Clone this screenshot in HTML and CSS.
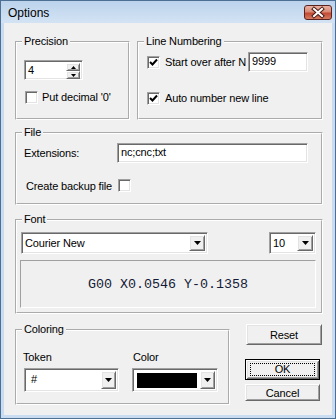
FILE: index.html
```html
<!DOCTYPE html>
<html lang="en">
<head>
  <meta charset="UTF-8" />
  <title>Options</title>
  <link rel="stylesheet" href="styles.css">
</head>
<body>
  <div class="window">
    <div class="titlebar">
      <span class="title">Options</span>
      <div class="close">
        <svg width="26" height="13" viewBox="0 0 26 13">
          <path d="M9 3 L17 10 M17 3 L9 10" stroke="#4a1c16" stroke-width="4" stroke-linecap="square"/>
          <path d="M9 3 L17 10 M17 3 L9 10" stroke="#fff" stroke-width="2" stroke-linecap="square"/>
        </svg>
      </div>
    </div>

    <div class="client">
      <!-- Precision + Line numbering -->
      <div class="row">
        <div class="group precision">
          <div class="legend">Precision</div>
          <div class="spin sunken">
            <span class="field-text">4</span>
            <div class="spin-btns">
              <div class="spin-btn raised">
                <svg width="5" height="3" viewBox="0 0 5 3"><path d="M2.5 0 L5 3 L0 3 Z" fill="#000"/></svg>
              </div>
              <div class="spin-btn raised">
                <svg width="5" height="3" viewBox="0 0 5 3"><path d="M0 0 L5 0 L2.5 3 Z" fill="#000"/></svg>
              </div>
            </div>
          </div>
          <div class="check-row decimal">
            <span class="check sunken"></span>
            <span class="check-label">Put decimal '0'</span>
          </div>
        </div>

        <div class="group numbering">
          <div class="legend">Line Numbering</div>
          <div class="check-row start-over">
            <span class="check sunken checked">
              <svg width="9" height="9" viewBox="0 0 9 9"><path d="M1 4 L3.5 6.5 L8 1.5" stroke="#000" stroke-width="2" fill="none"/></svg>
            </span>
            <span class="check-label wide">Start over after N</span>
            <div class="textbox sunken n-box">9999</div>
          </div>
          <div class="check-row auto-number">
            <span class="check sunken checked">
              <svg width="9" height="9" viewBox="0 0 9 9"><path d="M1 4 L3.5 6.5 L8 1.5" stroke="#000" stroke-width="2" fill="none"/></svg>
            </span>
            <span class="check-label">Auto number new line</span>
          </div>
        </div>
      </div>

      <!-- File -->
      <div class="group file">
        <div class="legend">File</div>
        <div class="field-row ext-row">
          <span class="ext-label">Extensions:</span>
          <div class="textbox sunken ext-box">nc;cnc;txt</div>
        </div>
        <div class="field-row backup-row">
          <span class="backup-label">Create backup file</span>
          <span class="check sunken"></span>
        </div>
      </div>

      <!-- Font -->
      <div class="group font">
        <div class="legend">Font</div>
        <div class="font-row">
          <div class="combo sunken font-name">
            <span class="field-text">Courier New</span>
            <div class="drop raised">
              <svg width="7" height="4" viewBox="0 0 7 4"><path d="M0 0 L7 0 L3.5 4 Z" fill="#000"/></svg>
            </div>
          </div>
          <div class="combo sunken font-size">
            <span class="field-text">10</span>
            <div class="drop raised">
              <svg width="7" height="4" viewBox="0 0 7 4"><path d="M0 0 L7 0 L3.5 4 Z" fill="#000"/></svg>
            </div>
          </div>
        </div>
        <div class="preview">G00 X0.0546 Y-0.1358</div>
      </div>

      <!-- Coloring + buttons -->
      <div class="row bottom-row">
        <div class="group coloring">
          <div class="legend">Coloring</div>
          <div class="color-cols">
            <div class="col token-col">
              <div class="col-label">Token</div>
              <div class="combo sunken token-combo">
                <span class="field-text hash">#</span>
                <div class="drop raised">
                  <svg width="7" height="4" viewBox="0 0 7 4"><path d="M0 0 L7 0 L3.5 4 Z" fill="#000"/></svg>
                </div>
              </div>
            </div>
            <div class="col color-col">
              <div class="col-label">Color</div>
              <div class="combo sunken color-combo">
                <span class="swatch"></span>
                <div class="drop raised">
                  <svg width="7" height="4" viewBox="0 0 7 4"><path d="M0 0 L7 0 L3.5 4 Z" fill="#000"/></svg>
                </div>
              </div>
            </div>
          </div>
        </div>

        <div class="buttons">
          <div class="btn raised reset">Reset</div>
          <div class="btn ok"><span class="focus">OK</span></div>
          <div class="btn raised cancel">Cancel</div>
        </div>
      </div>
    </div>
  </div>
</body>
</html>
```

FILE: styles.css
```css
body {
  margin: 0;
  font-family: "Liberation Sans", Arial, sans-serif;
  font-size: 11px;
  letter-spacing: -0.15px;
  color: #000;
  background: #fff;
  white-space: nowrap;
}
.window {
  width: 336px;
  height: 419px;
  box-sizing: border-box;
  border: 1px solid #4d6f94;
  background: #c9dcf1;
}
.titlebar {
  height: 22px;
  display: flex;
  justify-content: space-between;
  align-items: flex-start;
  background: linear-gradient(to bottom, #bcd3ec, #d3e3f4);
}
.title {
  font-size: 12px;
  letter-spacing: 0;
  margin: 5px 0 0 7px;
}
.close {
  width: 28px;
  height: 15px;
  box-sizing: border-box;
  margin: 4px 3px 0 0;
  border: 1px solid #5b231d;
  border-radius: 3px;
  background: linear-gradient(to bottom, #eab1a3 0%, #d98a76 45%, #c24a33 55%, #d57a62 100%);
}
.close svg {
  display: block;
}
.client {
  height: 392px;
  margin: 0 3px;
  padding: 18px 0 0 11px;
  box-sizing: border-box;
  background: #f0f0f0;
}

/* shared 3D borders */
.sunken {
  box-sizing: border-box;
  border: 1px solid;
  border-color: #a0a0a0 #fff #fff #a0a0a0;
  box-shadow: inset 1px 1px #696969, inset -1px -1px #e3e3e3;
  background: #fff;
}
.raised {
  box-sizing: border-box;
  border: 1px solid;
  border-color: #fff #696969 #696969 #fff;
  box-shadow: inset 1px 1px #e3e3e3, inset -1px -1px #a0a0a0;
  background: #f0f0f0;
}

/* group boxes */
.row {
  display: flex;
}
.group {
  box-sizing: border-box;
  border: 2px groove #fff;
}
.legend {
  display: table;
  margin: -8px 0 0 5px;
  padding: 0 2px;
  line-height: 13px;
  background: #f0f0f0;
}
.precision {
  width: 115px;
  height: 79px;
}
.numbering {
  width: 186px;
  height: 79px;
  margin-left: 7px;
}

.spin {
  width: 59px;
  height: 20px;
  margin: 12px 0 0 7px;
  display: flex;
  justify-content: space-between;
}
.field-text {
  line-height: 16px;
  padding: 1px 0 0 3px;
}
.spin-btns {
  display: flex;
  flex-direction: column;
  margin: 2px 2px 0 0;
}
.spin-btn {
  width: 14px;
  height: 8px;
  display: flex;
  align-items: center;
  justify-content: center;
}
.spin-btn svg {
  display: block;
}

.check-row {
  display: flex;
  align-items: center;
}
.check {
  width: 13px;
  height: 13px;
  display: flex;
  align-items: center;
  justify-content: center;
  flex: none;
}
.check svg {
  display: block;
}
.check-label {
  margin-left: 4px;
  line-height: 13px;
}
.decimal {
  margin: 11px 0 0 8px;
}
.start-over {
  margin: 4px 0 0 8px;
  height: 20px;
}
.check-label.wide {
  width: 83px;
  margin-left: 5px;
}
.auto-number {
  margin: 20px 0 0 8px;
}
.auto-number .check-label {
  margin-left: 5px;
}
.textbox {
  height: 20px;
  line-height: 17px;
  padding-left: 3px;
}
.n-box {
  width: 60px;
}

/* file */
.file {
  width: 308px;
  height: 73px;
  margin-top: 12px;
}
.field-row {
  display: flex;
  align-items: center;
}
.ext-row {
  margin: 4px 0 0 7px;
}
.ext-label {
  width: 93px;
}
.ext-box {
  width: 191px;
}
.backup-row {
  margin: 16px 0 0 9px;
}
.backup-label {
  width: 92px;
}

/* font */
.font {
  width: 308px;
  height: 95px;
  margin-top: 14px;
}
.font-row {
  display: flex;
  justify-content: space-between;
  margin: 6px 5px 0 4px;
}
.combo {
  height: 22px;
  display: flex;
  justify-content: space-between;
  align-items: stretch;
}
.combo .field-text {
  line-height: 18px;
}
.drop {
  width: 16px;
  margin: 2px 2px 2px 0;
  display: flex;
  align-items: center;
  justify-content: center;
}
.drop svg {
  display: block;
}
.font-name {
  width: 187px;
}
.font-size {
  width: 47px;
}
.preview {
  width: 296px;
  height: 48px;
  box-sizing: border-box;
  margin: 6px 0 0 3px;
  border: 1px solid;
  border-color: #a0a0a0 #fff #fff #a0a0a0;
  display: flex;
  align-items: center;
  justify-content: center;
  font-family: "Liberation Mono", "Courier New", monospace;
  font-size: 13.33px;
  letter-spacing: 0;
  color: #141a36;
}

/* coloring */
.bottom-row {
  margin-top: 10px;
  align-items: flex-start;
}
.coloring {
  width: 215px;
  height: 76px;
  margin-top: 5px;
}
.color-cols {
  display: flex;
  margin: 15px 0 0 6px;
}
.col-label {
  line-height: 13px;
}
.token-col {
  width: 96px;
}
.token-combo {
  width: 95px;
  height: 24px;
  margin: 4px 0 0 1px;
}
.hash {
  padding-left: 6px;
}
.color-col {
  margin-left: 13px;
}
.color-col .col-label {
  margin-left: 1px;
}
.color-combo {
  width: 86px;
  height: 24px;
  margin-top: 4px;
}
.color-combo .drop,
.token-combo .drop {
  width: 15px;
}
.swatch {
  width: 60px;
  height: 15px;
  margin: 4px 0 0 4px;
  background: #000;
}

/* buttons */
.buttons {
  margin-left: 15px;
  display: flex;
  flex-direction: column;
}
.btn {
  width: 75px;
  height: 21px;
  display: flex;
  align-items: center;
  justify-content: center;
  box-sizing: border-box;
}
.reset {
  width: 76px;
  margin-left: 1px;
}
.ok {
  margin-top: 14px;
  border: 1px solid #000;
  box-shadow: inset 1px 1px #fff, inset -1px -1px #696969, inset 2px 2px #e3e3e3, inset -2px -2px #a0a0a0;
  background: #f0f0f0;
}
.focus {
  width: 65px;
  height: 13px;
  box-sizing: border-box;
  border: 1px dotted #000;
  text-align: center;
  line-height: 11px;
}
.cancel {
  height: 17px;
  margin-top: 4px;
}
```
